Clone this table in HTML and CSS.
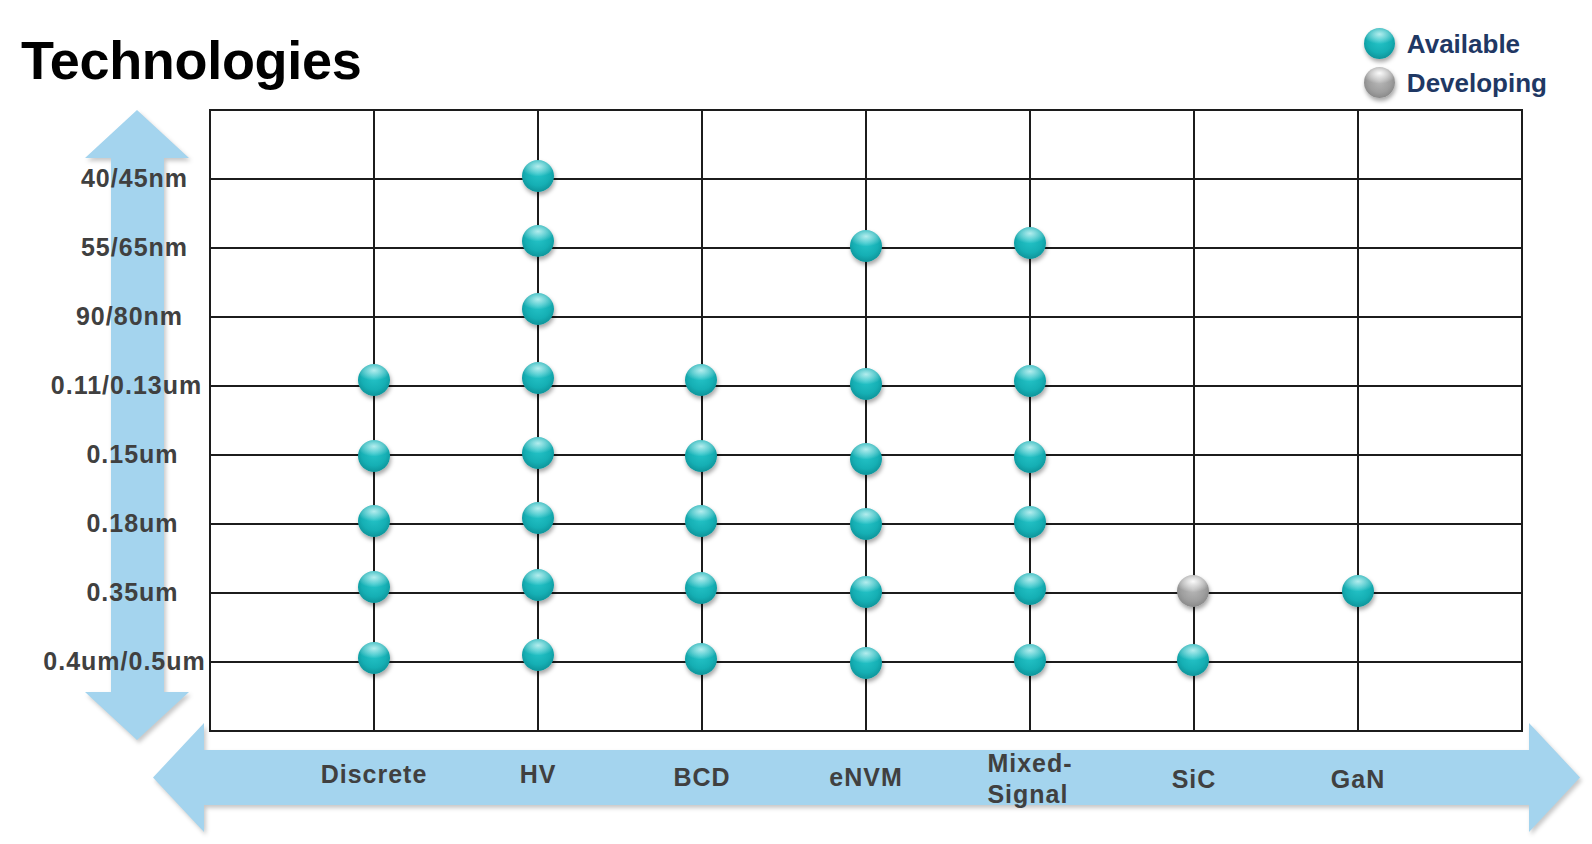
FILE: index.html
```html
<!DOCTYPE html>
<html lang="en">
<head>
<meta charset="utf-8">
<title>Technologies</title>
<link rel="stylesheet" href="styles.css">
</head>
<body>
<div class="slide">
  <header class="top">
    <h1 class="title">Technologies</h1>
    <ul class="legend">
      <li class="legend-row"><span class="dot dot--static"></span><span class="legend-text">Available</span></li>
      <li class="legend-row"><span class="dot dot--static dot--dev"></span><span class="legend-text">Developing</span></li>
    </ul>
  </header>

  <div class="chart">
    <svg class="arrow arrow-v" width="104" height="630" viewBox="0 0 104 630">
      <path d="M52 0 L104 48 L79 48 L79 582 L104 582 L52 630 L0 582 L26 582 L26 48 L0 48 Z"/>
    </svg>
    <svg class="arrow arrow-h" width="1427" height="109" viewBox="0 0 1427 109">
      <path d="M0 54.5 L51 0 L51 27 L1376 27 L1376 0 L1427 54.5 L1376 109 L1376 82 L51 82 L51 109 Z"/>
    </svg>

    <div class="y-axis">
      <div class="y-label y-label--r">40/45nm</div>
      <div class="y-label y-label--r">55/65nm</div>
      <div class="y-label y-label--mid">90/80nm</div>
      <div class="y-label y-label--wide">0.11/0.13um</div>
      <div class="y-label">0.15um</div>
      <div class="y-label">0.18um</div>
      <div class="y-label">0.35um</div>
      <div class="y-label y-label--wider">0.4um/0.5um</div>
    </div>

    <div class="plot">
      <!-- Discrete -->
      <span class="dot" style="left:147px;top:253px"></span>
      <span class="dot" style="left:147px;top:329px"></span>
      <span class="dot" style="left:147px;top:394px"></span>
      <span class="dot" style="left:147px;top:460px"></span>
      <span class="dot" style="left:147px;top:531px"></span>
      <!-- HV -->
      <span class="dot" style="left:311px;top:49px"></span>
      <span class="dot" style="left:311px;top:114px"></span>
      <span class="dot" style="left:311px;top:182px"></span>
      <span class="dot" style="left:311px;top:251px"></span>
      <span class="dot" style="left:311px;top:326px"></span>
      <span class="dot" style="left:311px;top:391px"></span>
      <span class="dot" style="left:311px;top:458px"></span>
      <span class="dot" style="left:311px;top:528px"></span>
      <!-- BCD -->
      <span class="dot" style="left:474px;top:253px"></span>
      <span class="dot" style="left:474px;top:329px"></span>
      <span class="dot" style="left:474px;top:394px"></span>
      <span class="dot" style="left:474px;top:461px"></span>
      <span class="dot" style="left:474px;top:532px"></span>
      <!-- eNVM -->
      <span class="dot" style="left:639px;top:119px"></span>
      <span class="dot" style="left:639px;top:257px"></span>
      <span class="dot" style="left:639px;top:332px"></span>
      <span class="dot" style="left:639px;top:397px"></span>
      <span class="dot" style="left:639px;top:465px"></span>
      <span class="dot" style="left:639px;top:536px"></span>
      <!-- Mixed-Signal -->
      <span class="dot" style="left:803px;top:116px"></span>
      <span class="dot" style="left:803px;top:254px"></span>
      <span class="dot" style="left:803px;top:330px"></span>
      <span class="dot" style="left:803px;top:395px"></span>
      <span class="dot" style="left:803px;top:462px"></span>
      <span class="dot" style="left:803px;top:533px"></span>
      <!-- SiC -->
      <span class="dot dot--dev" style="left:966px;top:464px"></span>
      <span class="dot" style="left:966px;top:533px"></span>
      <!-- GaN -->
      <span class="dot" style="left:1131px;top:464px"></span>
    </div>

    <div class="x-axis">
      <div class="x-label x-label--up">Discrete</div>
      <div class="x-label x-label--up">HV</div>
      <div class="x-label">BCD</div>
      <div class="x-label">eNVM</div>
      <div class="x-label x-label--two"><span class="x-two">Mixed-<br>Signal</span></div>
      <div class="x-label x-label--down">SiC</div>
      <div class="x-label x-label--down">GaN</div>
    </div>
  </div>
</div>
</body>
</html>
```

FILE: styles.css
```css
* { box-sizing: border-box; }

html, body {
  margin: 0;
  padding: 0;
  background: #ffffff;
}

body {
  font-family: "Liberation Sans", Arial, sans-serif;
}

.slide {
  width: 1592px;
  height: 844px;
  overflow: hidden;
  background: #ffffff;
}

/* ---------- header ---------- */
.top {
  height: 109px;
  display: flex;
  justify-content: space-between;
  align-items: flex-start;
  padding: 0 45px 0 21px;
}

.title {
  margin: 0;
  padding-top: 33px;
  font-size: 54px;
  line-height: 54px;
  font-weight: 700;
  letter-spacing: -0.3px;
  color: #000000;
}

.legend {
  list-style: none;
  margin: 0;
  padding: 24px 0 0 0;
  display: flex;
  flex-direction: column;
}

.legend-row {
  height: 39px;
  display: flex;
  align-items: center;
  gap: 12px;
}

.legend-text {
  font-size: 26px;
  font-weight: 700;
  color: #1f3864;
  line-height: 30px;
}

/* ---------- spheres ---------- */
.dot {
  position: absolute;
  width: 32px;
  height: 32px;
  border-radius: 50%;
  background:
    radial-gradient(ellipse 72% 42% at 50% 20%, rgba(230, 255, 255, 0.75) 0%, rgba(230, 255, 255, 0) 75%),
    radial-gradient(circle at 50% 42%, #25c3c7 0%, #15afb4 50%, #0b8a90 85%, #087378 100%);
  box-shadow: 1px 3px 4px rgba(0, 0, 0, 0.35);
}

.dot--static {
  position: static;
  flex: 0 0 auto;
  width: 31px;
  height: 31px;
}

.dot--dev {
  background:
    radial-gradient(ellipse 75% 45% at 50% 20%, rgba(255, 255, 255, 0.95) 0%, rgba(255, 255, 255, 0) 75%),
    radial-gradient(circle at 50% 45%, #b8b8b8 0%, #9e9e9e 50%, #808080 85%, #6c6c6c 100%);
}

/* ---------- chart ---------- */
.chart {
  position: relative;
  isolation: isolate;
  display: grid;
  grid-template-columns: 209px 1314px;
  grid-template-rows: 623px 100px;
}

.arrow {
  position: absolute;
  z-index: -1;
  overflow: visible;
  fill: #a4d4ee;
  filter: drop-shadow(2px 3px 2px rgba(0, 0, 0, 0.22));
}

.arrow-v {
  left: 85px;
  top: 1px;
}

.arrow-h {
  left: 153px;
  top: 614px;
}

.y-axis {
  padding: 35px 0 0 56px;
  display: flex;
  flex-direction: column;
}

.y-label {
  height: 69px;
  display: flex;
  align-items: center;
  justify-content: center;
  white-space: nowrap;
  font-size: 25px;
  font-weight: 700;
  letter-spacing: 1px;
  color: #404040;
}

.y-label--r { padding-left: 4px; }
.y-label--mid { padding-right: 6px; }
.y-label--wide { padding-right: 12px; }
.y-label--wider { padding-right: 16px; }

.plot {
  position: relative;
  width: 1314px;
  height: 623px;
  border: 2px solid #1c1c1c;
  background-color: #ffffff;
  background-image:
    linear-gradient(90deg, #1c1c1c 2px, transparent 2px),
    linear-gradient(180deg, #1c1c1c 2px, transparent 2px);
  background-size: 164px 100%, 100% 69px;
  background-position: -2px 0, 0 -2px;
}

.x-axis {
  grid-column: 2;
  display: flex;
  align-items: center;
  padding-left: 83px;
  padding-bottom: 10px;
}

.x-label {
  width: 164px;
  flex: 0 0 164px;
  text-align: center;
  font-size: 25px;
  font-weight: 700;
  letter-spacing: 1px;
  color: #404040;
  line-height: 31px;
}

.x-label--up { margin-top: -6px; }
.x-label--down { margin-top: 4px; }
.x-label--two { margin-top: 4px; }

.x-two {
  display: inline-block;
  text-align: left;
}
```
